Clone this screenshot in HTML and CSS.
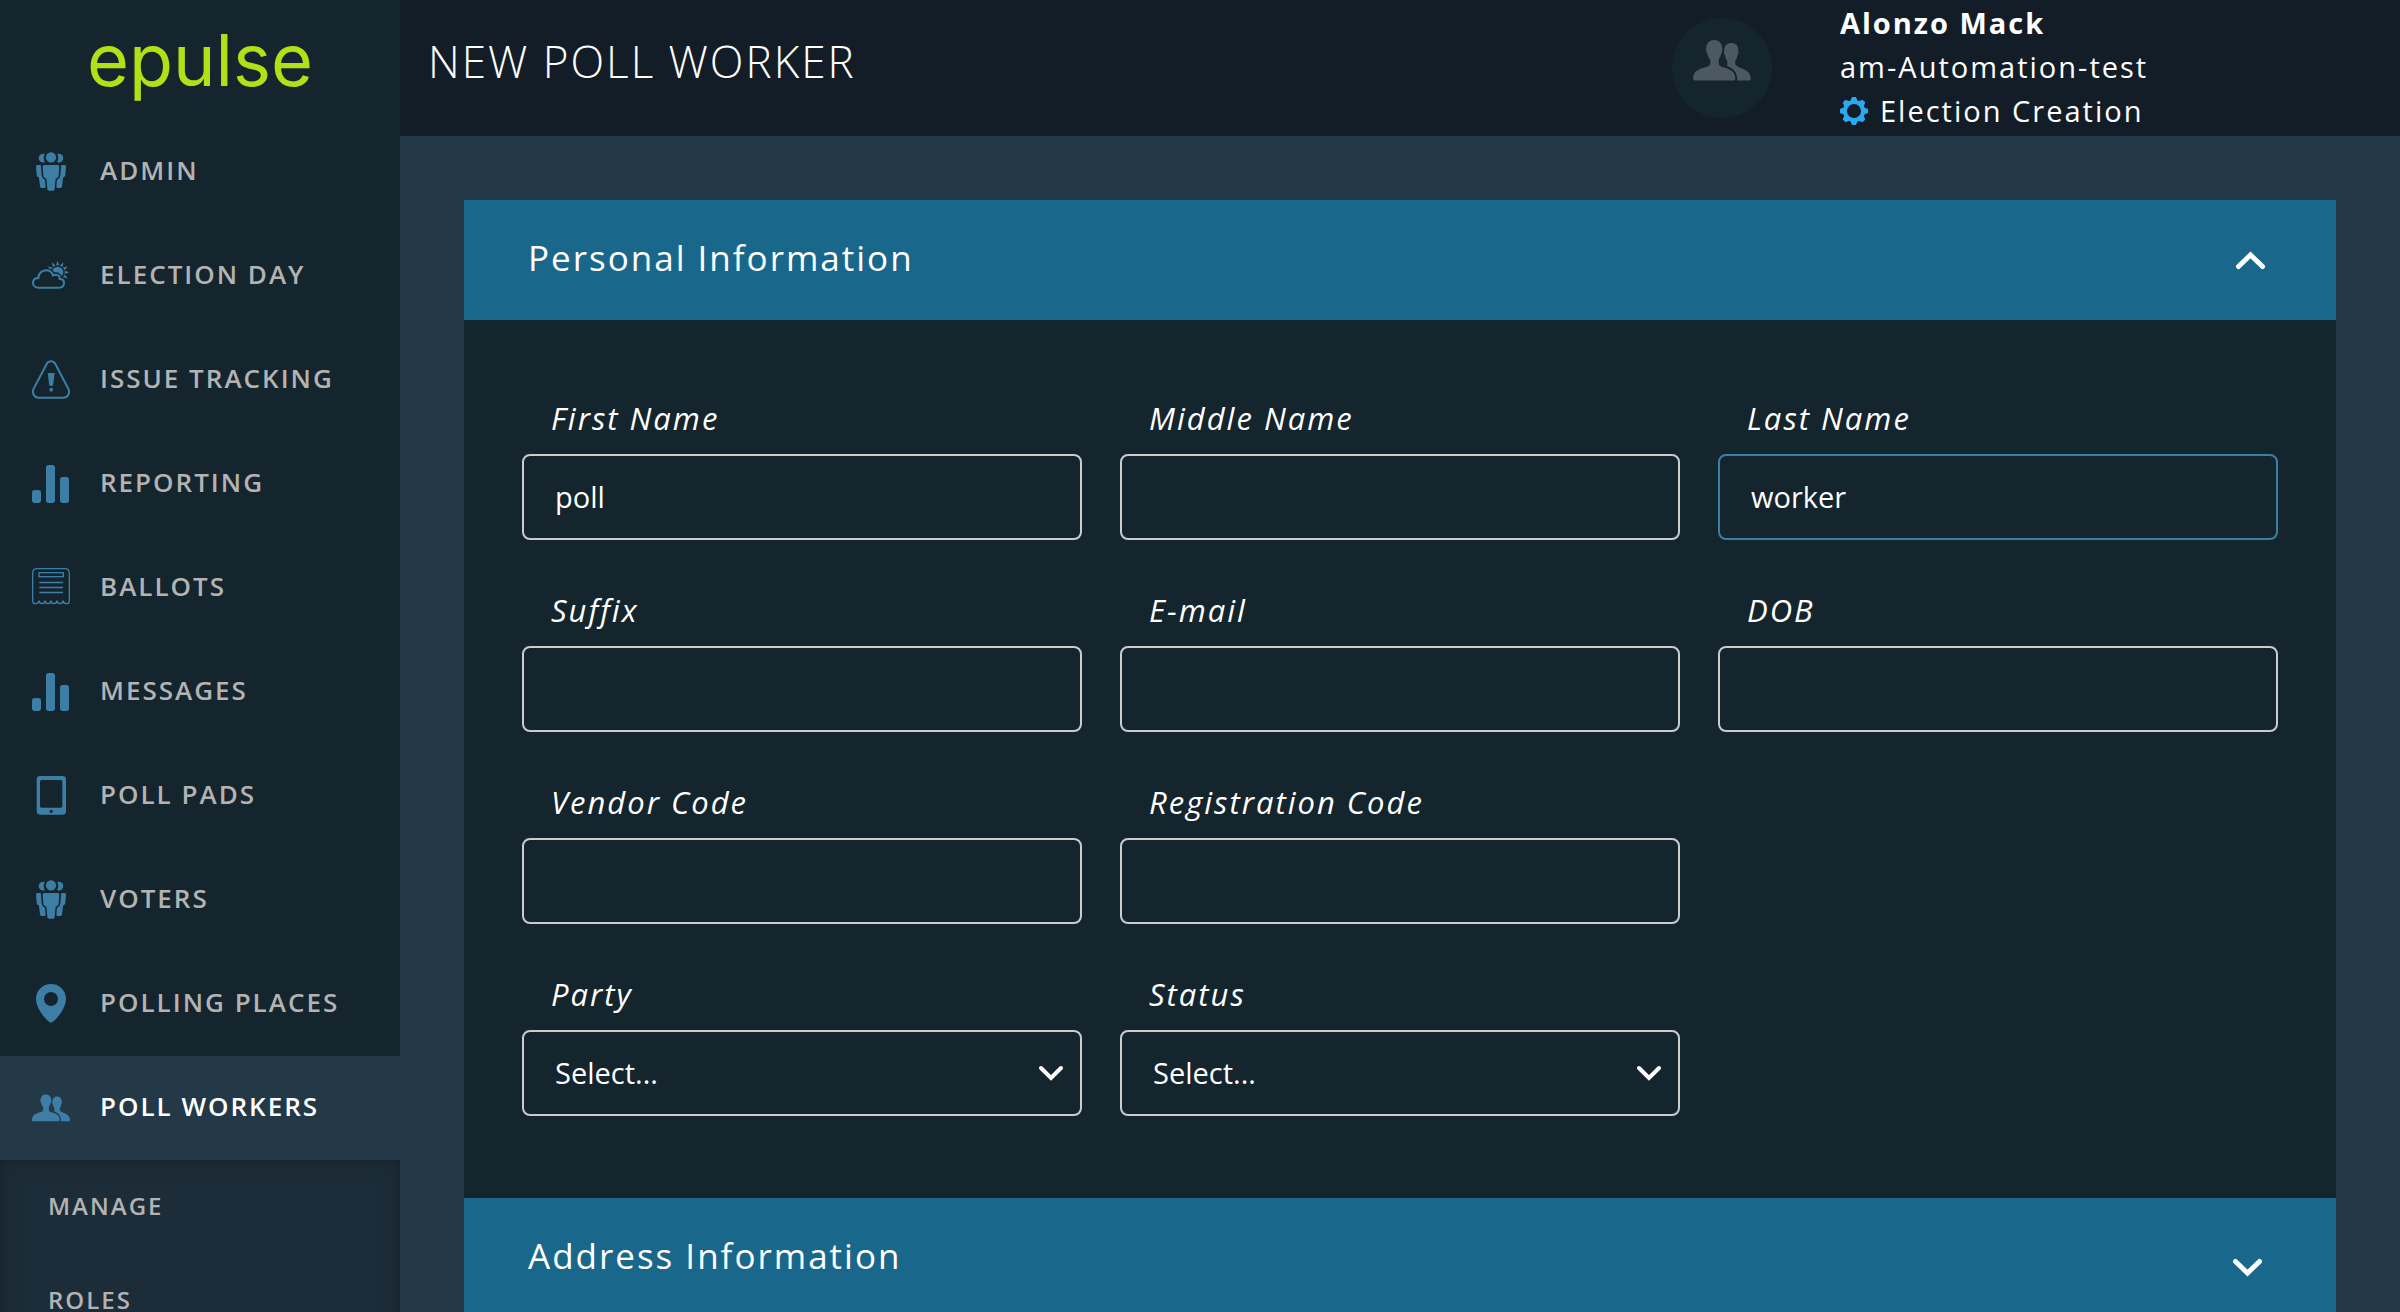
FILE: index.html
```html
<!DOCTYPE html>
<html lang="en">
<head>
<meta charset="utf-8">
<meta name="viewport" content="width=device-width, initial-scale=1">
<title>New Poll Worker</title>
<link rel="stylesheet" href="styles.css">
</head>
<body>
<svg class="sprite" aria-hidden="true">
  <symbol id="i-group" viewBox="0 0 114 120">
    <circle cx="57" cy="16" r="15.500"/>
    <path d="M36 39H78Q83 39 82 44L80 70Q80 78 74 79Q70 80 70 86L68 110Q68 116 63 116H51Q46 116 46 110L44 86Q44 80 40 79Q34 78 34 70L32 44Q31 39 36 39Z"/>
    <g id="side">
      <path d="M38 6C28 3 20 10 20 19C20 27 28 34 39 31C34 24 34 13 38 6Z"/>
      <path d="M15 39H25Q28 40 27 46L29 70Q30 80 39 84L41 104Q41 108 37 108H28Q24 108 24 103L21 78Q21 75 18 75Q14 74 14 68L12 44Q12 39 15 39Z"/>
    </g>
    <use href="#side" transform="matrix(-1 0 0 1 114 0)"/>
  </symbol>
  <symbol id="i-weather" viewBox="0 0 114 120">
    <circle cx="77" cy="49" r="17"/>
    <path id="ray" d="M72 28L77 14L82 28Z"/>
    <use href="#ray" transform="rotate(30 77 49)"/>
    <use href="#ray" transform="rotate(60 77 49)"/>
    <use href="#ray" transform="rotate(90 77 49)"/>
    <use href="#ray" transform="rotate(120 77 49)"/>
    <use href="#ray" transform="rotate(-30 77 49)"/>
    <use href="#ray" transform="rotate(-60 77 49)"/>
    <path class="cloud-gap" d="M20 95H80C90 95 96 89 96 81C96 73 90 69 83 69C84 62 79 56 72 56C69 56 66 56 63 58C60 49 52 43 42 43C29 43 19 53 19 66C9 66 3 72 3 80C3 89 10 95 20 95Z"/>
    <path fill="none" stroke="currentColor" stroke-width="6" d="M20 95H80C90 95 96 89 96 81C96 73 90 69 83 69C84 62 79 56 72 56C69 56 66 56 63 58C60 49 52 43 42 43C29 43 19 53 19 66C9 66 3 72 3 80C3 89 10 95 20 95Z"/>
  </symbol>
  <symbol id="i-alert" viewBox="0 0 114 120">
    <path fill="none" stroke="currentColor" stroke-width="6" d="M44 12C50 1 64 1 70 12L109 86C115 98 108 113 94 113H20C6 113 -1 98 5 86Z"/>
    <path d="M47 39H68L63 77H52Z"/><circle cx="57.500" cy="89" r="5.500"/>
  </symbol>
  <symbol id="i-bars" viewBox="0 0 114 120">
    <rect y="78" width="27" height="39" rx="8"/><rect x="42" y="3" width="27" height="114" rx="8"/><rect x="84" y="39" width="27" height="78" rx="8"/>
  </symbol>
  <symbol id="i-ballot" viewBox="0 0 114 120">
    <g fill="none" stroke="currentColor" stroke-width="4">
      <path d="M2 98V16Q2 2 16 2H98Q112 2 112 16V98Q112 107 104 107Q94 107 93 98Q92 107 84 107Q76 107 75 98Q74 107 66 107Q58 107 57 98Q56 107 48 107Q40 107 39 98Q38 107 30 107Q22 107 21 98Q20 107 10 107Q2 107 2 98Z"/>
      <rect x="21" y="14" width="73" height="12"/>
      <path d="M22 43.500H93M22 58.500H93M22 73.500H93"/>
    </g>
  </symbol>
  <symbol id="i-tablet" viewBox="0 0 114 120">
    <path fill-rule="evenodd" d="M24 0H92Q102 0 102 10V106Q102 116 92 116H24Q14 116 14 106V10Q14 0 24 0ZM29 12Q24 12 24 17V91Q24 95 29 95H86Q91 95 91 91V17Q91 12 86 12ZM57.500 101A5 5 0 1 0 57.500 111A5 5 0 1 0 57.500 101Z"/>
  </symbol>
  <symbol id="i-pin" viewBox="0 0 114 120">
    <path fill-rule="evenodd" d="M57 0C32 0 12 19 12 45C12 72 40 107 54 115Q57 117 60 115C74 107 102 72 102 45C102 19 82 0 57 0ZM57 24A21 21 0 1 1 57 66A21 21 0 1 1 57 24Z"/>
  </symbol>
  <symbol id="i-people" viewBox="0 18 115 82">
    <path d="M42 18C51 18 58 24 58 35C59 37 58 42 56 45C55 51 52 55 51 57V66C53 76 85 71 84 96Q84 99 81 99H3Q0 99 0 96C-1 71 31 76 34 66V57C32 55 29 51 28 45C26 42 25 37 26 35C26 24 33 18 42 18Z"/>
    <path d="M76 24C85 24 91 30 90 40C91 43 90 47 88 49C88 54 85 57 84 60V66C87 76 116 74 115 96Q115 99 112 99H88C88 82 82 77 67 69C69 67 68 64 68 60C66 57 64 54 64 49C61 47 61 43 62 40C61 30 68 24 76 24Z"/>
  </symbol>
  <symbol id="i-chevron-down" viewBox="0 0 26 16">
    <path fill="none" stroke="currentColor" stroke-width="4" stroke-linecap="round" d="M3 3L13 13L23 3"/>
  </symbol>
</svg>

<div class="app">
  <aside class="sidebar">
    <a class="logo" href="#">epulse</a>
    <nav aria-label="Main">
      <ul class="nav">
        <li><a class="nav-link" href="#"><svg class="nav-icon"><use href="#i-group"/></svg>ADMIN</a></li>
        <li><a class="nav-link" href="#"><svg class="nav-icon"><use href="#i-weather"/></svg>ELECTION DAY</a></li>
        <li><a class="nav-link" href="#"><svg class="nav-icon"><use href="#i-alert"/></svg>ISSUE TRACKING</a></li>
        <li><a class="nav-link" href="#"><svg class="nav-icon"><use href="#i-bars"/></svg>REPORTING</a></li>
        <li><a class="nav-link" href="#"><svg class="nav-icon"><use href="#i-ballot"/></svg>BALLOTS</a></li>
        <li><a class="nav-link" href="#"><svg class="nav-icon"><use href="#i-bars"/></svg>MESSAGES</a></li>
        <li><a class="nav-link" href="#"><svg class="nav-icon"><use href="#i-tablet"/></svg>POLL PADS</a></li>
        <li><a class="nav-link" href="#"><svg class="nav-icon"><use href="#i-group"/></svg>VOTERS</a></li>
        <li><a class="nav-link" href="#"><svg class="nav-icon"><use href="#i-pin"/></svg>POLLING PLACES</a></li>
        <li>
          <a class="nav-link active" href="#" aria-current="page"><svg class="nav-icon"><use href="#i-people"/></svg>POLL WORKERS</a>
          <ul class="subnav">
            <li><a class="subnav-link" href="#">MANAGE</a></li>
            <li><a class="subnav-link" href="#">ROLES</a></li>
          </ul>
        </li>
      </ul>
    </nav>
  </aside>

  <div class="page">
    <header class="topbar">
      <h1 class="title">NEW POLL WORKER</h1>
      <div class="user">
        <div class="avatar"><svg class="avatar-icon"><use href="#i-people"/></svg></div>
        <div class="user-info">
          <strong>Alonzo Mack</strong>
          <span>am-Automation-test</span>
          <span class="status">
            <svg class="gear" viewBox="0 0 28 28"><g fill="currentColor"><path fill-rule="evenodd" d="M14 3A11 11 0 1 1 14 25A11 11 0 1 1 14 3ZM14 7A7 7 0 1 0 14 21A7 7 0 1 0 14 7Z"/><path id="cog" d="M10 5L12 0H16L18 5Z"/><use href="#cog" transform="rotate(45 14 14)"/><use href="#cog" transform="rotate(90 14 14)"/><use href="#cog" transform="rotate(135 14 14)"/><use href="#cog" transform="rotate(180 14 14)"/><use href="#cog" transform="rotate(225 14 14)"/><use href="#cog" transform="rotate(270 14 14)"/><use href="#cog" transform="rotate(315 14 14)"/></g></svg>
            Election Creation
          </span>
        </div>
      </div>
    </header>

    <main class="content">
      <form class="card">
        <button class="section-head" type="button" aria-expanded="true">Personal Information
          <svg class="toggle" viewBox="0 0 34 34"><path d="M6.500 18.500L18.500 7L30.500 18.500"/></svg>
        </button>
        <div class="fields">
          <div class="field"><label for="first">First Name</label><input id="first" type="text" value="poll"></div>
          <div class="field"><label for="middle">Middle Name</label><input id="middle" type="text"></div>
          <div class="field"><label for="last">Last Name</label><input id="last" class="current" type="text" value="worker"></div>
          <div class="field"><label for="suffix">Suffix</label><input id="suffix" type="text"></div>
          <div class="field"><label for="email">E-mail</label><input id="email" type="email"></div>
          <div class="field"><label for="dob">DOB</label><input id="dob" type="text"></div>
          <div class="field"><label for="vendor">Vendor Code</label><input id="vendor" type="text"></div>
          <div class="field"><label for="registration">Registration Code</label><input id="registration" type="text"></div>
          <div class="field row-start"><label for="party">Party</label>
            <div class="select"><select id="party"><option>Select...</option></select><svg class="select-arrow"><use href="#i-chevron-down"/></svg></div>
          </div>
          <div class="field"><label for="status">Status</label>
            <div class="select"><select id="status"><option>Select...</option></select><svg class="select-arrow"><use href="#i-chevron-down"/></svg></div>
          </div>
        </div>
        <button class="section-head" type="button" aria-expanded="false">Address Information
          <svg class="toggle" viewBox="0 0 34 34"><path d="M6.500 18.500L18.500 7L30.500 18.500"/></svg>
        </button>
      </form>
    </main>
  </div>
</div>
</body>
</html>
```
FILE: styles.css
```css
:root {
  --panel: #15252d;
  --page: #243947;
  --topbar: #131d27;
  --accent: #1a678c;
  --icon: #3d7ea6;
  --muted: #b3b3b3;
}

* { box-sizing: border-box; }

body {
  margin: 0;
  background: var(--page);
  color: #fff;
  font-family: "Open Sans", sans-serif;
  font-size: 29px;
}

ul { margin: 0; padding: 0; list-style: none; }
a { color: inherit; text-decoration: none; }
svg { flex: none; fill: currentColor; }

.sprite { position: absolute; width: 0; height: 0; }

.app {
  display: grid;
  grid-template-columns: 400px 1fr;
  height: 100vh;
  overflow: hidden;
}

/* Sidebar */
.sidebar { background: var(--panel); }

.logo {
  display: block;
  height: 120px;
  color: #b1e016;
  font: 400 72px/120px Inter, sans-serif;
  text-align: center;
}

.nav-link {
  display: flex;
  align-items: center;
  gap: 30px;
  height: 104px;
  padding: 0 32px 4px;
  color: var(--muted);
  font-size: 26px;
  font-weight: 600;
  letter-spacing: 2px;
  white-space: nowrap;
}

.nav-link.active { background: var(--page); color: #fff; }
.nav-icon { width: 38px; height: 40px; margin-top: 4px; color: var(--icon); }
.cloud-gap { fill: var(--panel); stroke: var(--panel); stroke-width: 14px; }

.subnav {
  background: #1c2d39;
  box-shadow: inset 0 0 20px #16212a;
}

.subnav-link {
  display: flex;
  align-items: center;
  height: 94px;
  padding: 0 48px 4px;
  color: var(--muted);
  font-size: 24px;
  font-weight: 600;
  letter-spacing: 2px;
}

/* Top bar */
.topbar {
  display: flex;
  justify-content: space-between;
  height: 136px;
  padding-left: 28px;
  background: var(--topbar);
}

.title {
  margin: 0;
  padding-top: 31px;
  font-size: 44px;
  font-weight: 300;
  line-height: 60px;
  letter-spacing: 2px;
}

.user { display: flex; gap: 68px; width: 728px; }

.avatar {
  display: flex;
  justify-content: center;
  flex: none;
  width: 100px;
  height: 100px;
  margin-top: 18px;
  padding-top: 22px;
  border-radius: 50%;
  background: var(--panel);
  color: #4c5962;
}

.avatar-icon { width: 58px; height: 41px; }

.user-info {
  display: flex;
  flex-direction: column;
  padding-top: 1px;
  line-height: 44px;
  letter-spacing: 2px;
}

.status { display: flex; align-items: center; gap: 12px; }
.gear { width: 28px; height: 28px; color: #2ca8ee; }

/* Form */
.content { padding: 64px; }

.section-head {
  display: flex;
  align-items: flex-start;
  justify-content: space-between;
  width: 100%;
  height: 120px;
  padding: 34px 70px 38px 64px;
  border: 0;
  background: var(--accent);
  color: #fff;
  font: 400 35px/48px "Open Sans", sans-serif;
  letter-spacing: 2px;
}

.toggle {
  width: 34px;
  height: 34px;
  margin-top: 14px;
  fill: none;
  stroke: #fff;
  stroke-width: 5px;
  stroke-linecap: round;
}

[aria-expanded="false"] .toggle { transform: rotate(180deg); }

.fields {
  display: grid;
  grid-template-columns: repeat(3, 1fr);
  gap: 50px 38px;
  padding: 78px 58px 82px;
  background: var(--panel);
}

.row-start { grid-column-start: 1; }

.field { display: flex; flex-direction: column; gap: 16px; }

.field label {
  padding-left: 29px;
  font-size: 31px;
  font-style: italic;
  line-height: 40px;
  letter-spacing: 2px;
}

.field input,
.field select {
  width: 100%;
  height: 86px;
  padding: 0 31px 2px;
  border: 2px solid #ccc;
  border-radius: 8px;
  outline: 0;
  appearance: none;
  background: transparent;
  color: #fff;
  font: inherit;
}

.field .current, .field input:focus { border-color: var(--icon); }

.select { display: grid; align-items: center; }
.select > * { grid-area: 1 / 1; }

.select-arrow {
  justify-self: end;
  width: 26px;
  height: 16px;
  margin-right: 18px;
  pointer-events: none;
}
```
